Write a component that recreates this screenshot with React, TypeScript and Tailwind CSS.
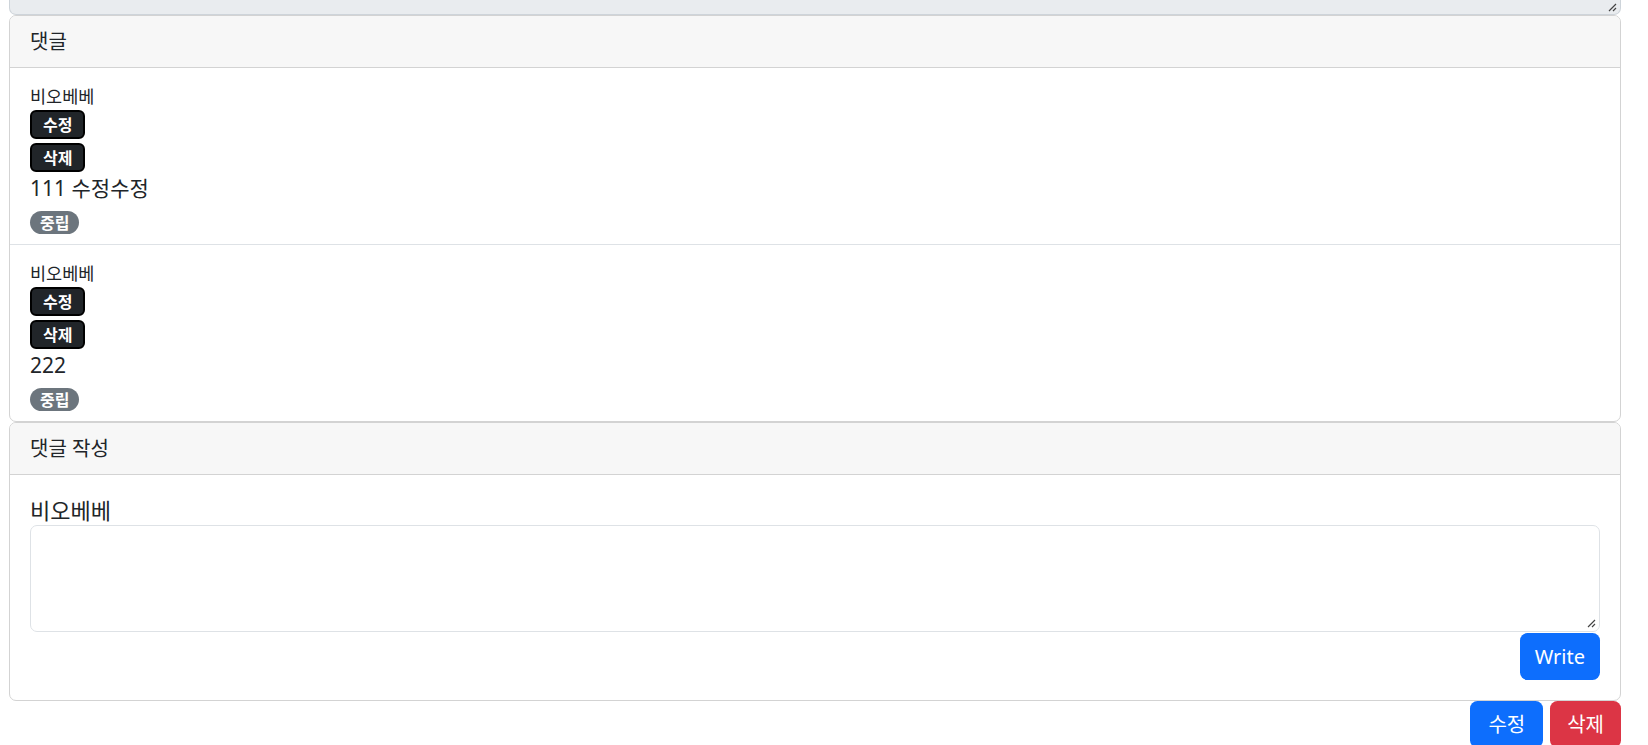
import React from 'react';

const FONT = { fontFamily: '"Noto Sans", "Noto Sans CJK KR", sans-serif' };

type Comment = { id: number; author: string; body: string; stance: string };

const COMMENTS: Comment[] = [
  { id: 1, author: '비오베베', body: '111 수정수정', stance: '중립' },
  { id: 2, author: '비오베베', body: '222', stance: '중립' },
];

function ResizeGrip({ className }: { className: string }) {
  return (
    <svg width="9" height="9" viewBox="0 0 9 9" className={className}>
      <path d="M8 1 L1 8 M8 5 L5 8" stroke="#444" strokeWidth="1.2" fill="none" />
    </svg>
  );
}

function DarkBadge({ label }: { label: string }) {
  return (
    <span className="inline-flex h-[29px] items-center rounded-[6px] border-2 border-black bg-[#212529] px-[11px] text-[16px] leading-none font-bold text-white">
      {label}
    </span>
  );
}

function CommentItem({ c, last }: { c: Comment; last: boolean }) {
  return (
    <div className={'px-[20px] py-[10px] ' + (last ? '' : 'border-b border-[#dee2e6]')}>
      <div className="h-[32px] pt-[8px] text-[17.5px] leading-[20px] text-[#212529]">{c.author}</div>
      <div className="flex h-[29px]">
        <DarkBadge label="수정" />
      </div>
      <div className="mt-[4px] flex h-[29px]">
        <DarkBadge label="삭제" />
      </div>
      <div className="h-[32px] text-[21px] leading-[32px] text-[#212529]">{c.body}</div>
      <div className="mt-[7px] flex h-[23px]">
        <span className="inline-flex items-center rounded-full bg-[#6c757d] px-[10px] text-[16px] leading-none font-bold text-white">
          {c.stance}
        </span>
      </div>
    </div>
  );
}

export default function App() {
  return (
    <div className="min-h-screen bg-white pl-[9px] text-[#212529]" style={FONT}>
      <div className="w-[1612px]">
        {/* tail of the post body textarea (read-only) */}
        <div className="relative h-[15px] rounded-b-[7px] border border-t-0 border-[#ced4da] bg-[#e9ecef]">
          <ResizeGrip className="absolute right-[3px] bottom-[2px]" />
        </div>

        {/* comments */}
        <div className="overflow-hidden rounded-[7px] border border-[#d3d3d3] bg-white">
          <div className="h-[52px] border-b border-[#d3d3d3] bg-[#f7f7f7] px-[20px] text-[20px] leading-[51px]">
            댓글
          </div>
          {COMMENTS.map((c, i) => (
            <CommentItem key={c.id} c={c} last={i === COMMENTS.length - 1} />
          ))}
        </div>

        {/* write a comment */}
        <div className="overflow-hidden rounded-[7px] border border-[#d3d3d3] bg-white">
          <div className="h-[52px] border-b border-[#d3d3d3] bg-[#f7f7f7] px-[20px] text-[20px] leading-[51px]">
            댓글 작성
          </div>
          <div className="p-[20px]">
            <div className="h-[30px] text-[22px] leading-[30px]">비오베베</div>
            <div className="relative h-[107px] rounded-[7px] border border-[#dee2e6] bg-white">
              <ResizeGrip className="absolute right-[3px] bottom-[3px]" />
            </div>
            <div className="flex justify-end">
              <button className="mt-[1px] h-[47px] rounded-[7.5px] bg-[#0d6efd] px-[15px] text-[20px] text-white">
                Write
              </button>
            </div>
          </div>
        </div>

        <div className="flex justify-end gap-[7px]">
          <button className="h-[47px] rounded-[7.5px] bg-[#0d6efd] px-[18px] text-[20px] text-white">수정</button>
          <button className="h-[47px] rounded-[7.5px] bg-[#dc3545] px-[17px] text-[20px] text-white">삭제</button>
        </div>
      </div>
    </div>
  );
}
